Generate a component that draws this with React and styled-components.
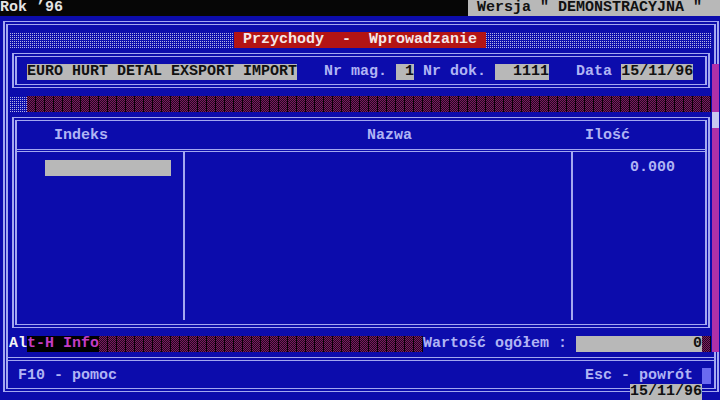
import React from "react";
import styled, { createGlobalStyle, css } from "styled-components";

const BLUE = "#0c0cac";
const LINE = "#a4a8f0";
const TEXT = "#b0b4f4";
const GRAY = "#b8b8b8";

const GlobalStyle = createGlobalStyle`
  body {
    margin: 0;
    background: #000;
  }
`;

// ░ on blue
const lightShade = css`
  background-color: ${BLUE};
  background-image: conic-gradient(from 90deg at 1px 1px, #b4b4e4 0 25%, transparent 0);
  background-size: 2px 2px;
`;

// ▒ magenta on black, with the dark 9th column of every cell
const darkShade = css`
  background-color: #240a1e;
  background-image: repeating-linear-gradient(90deg, transparent 0 8px, #0c0008 8px 9px),
    repeating-conic-gradient(#7c1862 0 25%, transparent 0 50%);
  background-size: auto, 2px 2px;
`;

const Screen = styled.div`
  position: relative;
  width: 720px;
  height: 400px;
  overflow: hidden;
  background: ${BLUE};
  font-family: "Liberation Mono", "DejaVu Sans Mono", monospace;
  font-size: 15px;
  font-weight: bold;
  line-height: 16px;
  white-space: pre;
  color: ${TEXT};
`;

const TopBar = styled.div`
  display: flex;
  justify-content: space-between;
  height: 16px;
  background: #060606;
  color: #e4e4e4;
`;

const Version = styled.div`
  width: 252px;
  background: ${GRAY};
  color: #111;
`;

const Frame = styled.div`
  margin: 5px 1px 8px 3px;
  height: 371px;
  box-sizing: border-box;
  border: solid ${LINE};
  border-width: 1px 2px;
  padding: 2px 1px;
`;

const FrameInner = styled.div`
  height: 100%;
  box-sizing: border-box;
  border: solid ${LINE};
  border-width: 1px 2px;
  padding: 7px 3px 4px 1px;
  display: flex;
  flex-direction: column;
`;

const TitleRow = styled.div`
  display: flex;
  height: 16px;
  padding-left: 225px;
  ${lightShade};
`;

const Title = styled.div`
  width: 252px;
  background: #b41414;
  color: #f4e8e8;
`;

const BoxOuter = styled.div`
  border: solid ${LINE};
  border-width: 1px 2px;
  padding: 2px 1px;
  margin: 5px 1px 8px 3px;
`;

const BoxInner = styled.div`
  border: solid ${LINE};
  border-width: 1px 2px;
`;

const HeaderLine = styled(BoxInner)`
  height: 16px;
  padding: 7px 3px 4px 1px;
`;

const Field = styled.span`
  display: inline-block;
  height: 16px;
  vertical-align: top;
  background: ${GRAY};
  color: #111;
  text-align: ${(p) => (p.$right ? "right" : "left")};
  width: ${(p) => (p.$width ? `${p.$width}px` : "auto")};
`;

const ShadeRow = styled.div`
  display: flex;
  height: 16px;
`;

const LightCells = styled.div`
  width: 18px;
  ${lightShade};
`;

const DarkCells = styled.div`
  flex: ${(p) => (p.$width ? "none" : 1)};
  width: ${(p) => (p.$width ? `${p.$width}px` : "auto")};
  ${darkShade};
`;

const TableInner = styled(BoxInner)`
  padding: 7px 0 4px;
`;

const TableHead = styled.div`
  display: grid;
  grid-template-columns: 166px 390px 132px;
  height: 16px;
`;

const HeadCell = styled.div`
  padding-left: ${(p) => p.$pad}px;
`;

const HeadRule = styled.div`
  margin-top: 5px;
  height: 1px;
  border-top: 1px solid ${LINE};
  border-bottom: 1px solid ${LINE};
`;

const TableBody = styled.div`
  display: grid;
  grid-template-columns: 166px 390px 132px;
  height: 168px;
`;

const Column = styled.div`
  box-sizing: border-box;
  padding-top: 8px;
  text-align: ${(p) => (p.$right ? "right" : "left")};
  padding-right: ${(p) => (p.$right ? 30 : 0)}px;
  border-left: ${(p) => (p.$ruled ? `2px solid ${LINE}` : "none")};
  border-right: ${(p) => (p.$ruled ? `2px solid ${LINE}` : "none")};
`;

const IndexInput = styled.div`
  margin-left: 28px;
  width: 126px;
  height: 16px;
  background: ${GRAY};
`;

const StatusRow = styled.div`
  display: flex;
  height: 16px;
`;

const HotKey = styled.span`
  color: #f4f4f4;
`;

const Hint = styled.span`
  background: #000;
  color: #c43cc4;
`;

const Divider = styled.div`
  height: 16px;
  margin: 0 -5px 0 -3px;
  background: linear-gradient(${LINE}, ${LINE}) 0 5px / 100% 1px no-repeat,
    linear-gradient(${LINE}, ${LINE}) 0 8px / 100% 1px no-repeat;
`;

const Footer = styled.div`
  display: flex;
  justify-content: space-between;
  height: 16px;
  padding-left: 9px;
`;

const Cursor = styled.span`
  display: inline-block;
  width: 9px;
  height: 16px;
  vertical-align: top;
  background: #6a6af0;
`;

const ScrollBar = styled.div`
  position: absolute;
  left: 712px;
  top: 64px;
  width: 7px;
  height: 288px;
  background: #b030a8;
`;

const ScrollThumb = styled.div`
  margin-top: 48px;
  height: 16px;
  background: #c8c8f0;
`;

const DateStamp = styled.div`
  position: absolute;
  left: 630px;
  top: 384px;
  width: 72px;
  height: 16px;
  background: ${GRAY};
  color: #111;
`;

export default function App() {
  return (
    <>
      <GlobalStyle />
      <Screen>
        <TopBar>
          <span>Rok ’96</span>
          <Version>{' Wersja " DEMONSTRACYJNA " '}</Version>
        </TopBar>
        <Frame>
          <FrameInner>
            <TitleRow>
              <Title>{" Przychody  -  Wprowadzanie "}</Title>
            </TitleRow>

            <BoxOuter>
              <HeaderLine>
                {" "}
                <Field>EURO HURT DETAL EXSPORT IMPORT</Field>
                {"   Nr mag. "}
                <Field $width={18} $right>
                  1
                </Field>
                {" Nr dok. "}
                <Field $width={54} $right>
                  1111
                </Field>
                {"   Data "}
                <Field>15/11/96</Field>
              </HeaderLine>
            </BoxOuter>

            <ShadeRow>
              <LightCells />
              <DarkCells />
            </ShadeRow>

            <BoxOuter>
              <TableInner>
                <TableHead>
                  <HeadCell $pad={37}>Indeks</HeadCell>
                  <HeadCell $pad={184}>Nazwa</HeadCell>
                  <HeadCell $pad={12}>Ilość</HeadCell>
                </TableHead>
                <HeadRule />
                <TableBody>
                  <Column>
                    <IndexInput />
                  </Column>
                  <Column $ruled />
                  <Column $right>0.000</Column>
                </TableBody>
              </TableInner>
            </BoxOuter>

            <StatusRow>
              <HotKey>Al</HotKey>
              <Hint>t-H Info</Hint>
              <DarkCells $width={324} />
              <span>{"Wartość ogółem : "}</span>
              <Field $width={126} $right>
                0
              </Field>
              <DarkCells $width={9} />
            </StatusRow>

            <Divider />

            <Footer>
              <span>F10 - pomoc</span>
              <span>
                {"Esc - powrót "}
                <Cursor />
              </span>
            </Footer>
          </FrameInner>
        </Frame>
        <ScrollBar>
          <ScrollThumb />
        </ScrollBar>
        <DateStamp>15/11/96</DateStamp>
      </Screen>
    </>
  );
}
